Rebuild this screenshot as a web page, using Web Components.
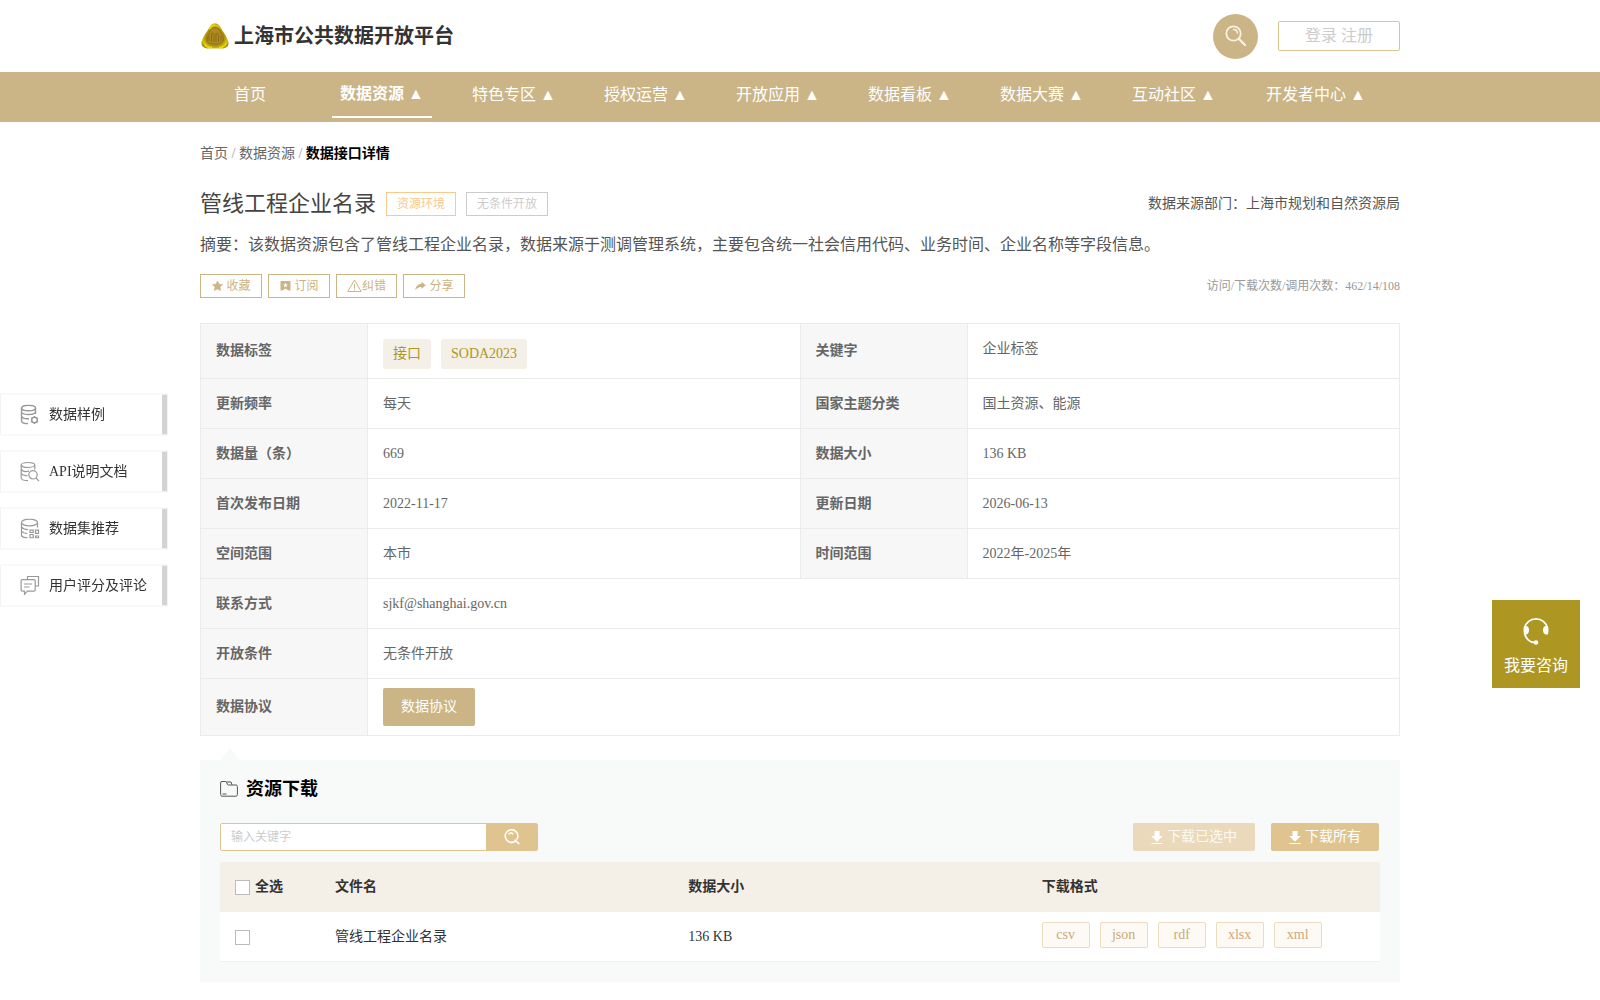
<!DOCTYPE html>
<html lang="zh-CN">
<head>
<meta charset="utf-8">
<title>管线工程企业名录 - 上海市公共数据开放平台</title>
<style>
  body {
    margin: 0;
    background: #fff;
    color: #333;
    font: 14px/20px "Liberation Serif", "Noto Sans CJK SC", serif;
    --gold: #cbb486;
    --gold-light: #e0c490;
    --olive: #ae9623;
    --line: #ebebeb;
    --page: 1200px;
  }
</style>
</head>
<body>
<portal-header></portal-header>
<portal-nav></portal-nav>
<portal-page>
  <bread-crumb></bread-crumb>
  <resource-intro></resource-intro>
  <info-table></info-table>
  <download-panel></download-panel>
</portal-page>
<side-menu></side-menu>
<consult-button></consult-button>

<script>
const base = `<style>
  *, *::before, *::after { box-sizing: border-box; }
  a { color: inherit; text-decoration: none; }
  button, input { font: inherit; color: inherit; margin: 0; padding: 0; border: 0; background: none; }
  button { cursor: pointer; }
  h1, h2, p { margin: 0; }
  svg { display: block; flex: none; }
  .wrap { max-width: var(--page); margin: 0 auto; }
</style>`;

function define(name, html, setup) {
  customElements.define(name, class extends HTMLElement {
    constructor() {
      super();
      this.attachShadow({ mode: 'open' }).innerHTML = base + html;
    }
    connectedCallback() { if (setup) setup(this, this.shadowRoot); }
  });
}

define('portal-header', `<style>
  :host { display: block; }
  .wrap { display: flex; align-items: center; height: 72px; }
  .brand { display: flex; align-items: center; gap: 5px; font-size: 20px; line-height: 30px; font-weight: bold; flex: 1; padding-left: 1px; }
  .search { width: 45px; height: 45px; border-radius: 50%; background: var(--gold); display: grid; place-items: center; margin-right: 20px; }
  .login { width: 122px; height: 30px; border: 1px solid var(--gold-light); border-radius: 2px; color: #ccc; font-size: 16px; line-height: 28px; text-align: center; }
</style>
<header class="wrap">
  <a class="brand" href="#">
    <svg width="28" height="26" viewBox="0 0 28 26">
      <defs>
        <radialGradient id="g" cx=".5" cy=".55" r=".6"><stop offset="0" stop-color="#b98f1c"/><stop offset=".55" stop-color="#ab8a12"/><stop offset=".8" stop-color="#d8c90c"/><stop offset="1" stop-color="#77600c"/></radialGradient>
      </defs>
      <path d="M14 .5C17 .5 18.500 2 20 5C22 9 27.500 15.500 27.500 20C27.500 24 24 25.500 20 25.500H8C4 25.500.5 24 .5 20C.5 15.500 6 9 8 5C9.500 2 11 .5 14 .5Z" fill="url(#g)"/>
      <path d="M4 21C5 24 9 24.500 11 24.500M18 24.500C21 24.500 24 23 25.500 20M8.500 6.500C9.500 3.500 11 2 14 2" fill="none" stroke="#e6dc00" stroke-width="1.500"/>
      <path d="M14 4.500C18 4.500 19 8 20 10C21.500 13 23 15 22 18C20 21 17 21 14 21C10 21 6 20.500 6 17C6 14 7.500 12 8.500 9.500C9.500 7 10.500 4.500 14 4.500Z" fill="#b08a20" stroke="#8f7014" stroke-width="1"/>
      <path d="M8 18V13M10.500 19V12C10.500 9.500 13 9.500 13 12V19M15 19V12C15 9.500 17.500 9.500 17.500 12V19M20 18V13" fill="none" stroke="#8a6a14"/>
    </svg>
    <span>上海市公共数据开放平台</span>
  </a>
  <button class="search" aria-label="搜索">
    <svg width="22" height="22" viewBox="0 0 22 22" fill="none" stroke="#f7f1e6" stroke-linecap="round">
      <circle cx="8.500" cy="8.500" r="7.200" stroke-width="1.800"/><path d="M8.500 4.500C10.800 4.500 12.300 6 12.300 8" stroke-width="1.600"/><path d="M14 14L20 20" stroke-width="2.400"/>
    </svg>
  </button>
  <div class="login"><a href="#">登录</a> <a href="#">注册</a></div>
</header>`);

define('portal-nav', `<style>
  :host { display: block; background: var(--gold); color: #fff; font-size: 16px; }
  nav { display: flex; gap: 32px; height: 50px; }
  a { min-width: 100px; height: 46px; line-height: 46px; text-align: center; white-space: nowrap; }
  a.on { font-weight: bold; line-height: 44px; border-bottom: 2px solid #fff; }
  a:last-child { padding: 0 10px; }
</style>
<nav class="wrap"></nav>`, (el, root) => {
  root.querySelector('nav').innerHTML = ['首页', '数据资源', '特色专区', '授权运营', '开放应用', '数据看板', '数据大赛', '互动社区', '开发者中心']
    .map((t, i) => `<a href="#"${i === 1 ? ' class="on" aria-current="page"' : ''}>${t}${i ? ' ▲' : ''}</a>`).join('');
});

define('portal-page', `<style>
  :host { display: block; }
  main { padding: 21px 0 18px; }
</style>
<main class="wrap"><slot></slot></main>`);

define('bread-crumb', `<style>
  :host { display: block; color: #999; line-height: 22px; }
  a { color: #666; }
  b { color: #000; }
</style>
<nav><a href="#">首页</a> / <a href="#">数据资源</a> / <b>数据接口详情</b></nav>`);

define('resource-intro', `<style>
  :host { display: block; color: #555; }
  .row { display: flex; align-items: center; }
  .head { gap: 10px; padding-top: 24px; }
  h1 { font-size: 22px; line-height: 30px; font-weight: normal; color: #444; }
  .tag { border: 1px solid #ccc; color: #ccc; font-size: 12px; line-height: 22px; padding: 0 10px; }
  .tag.warm { border-color: #fac98b; color: #fac98b; }
  .source { margin-left: auto; }
  p { font-size: 16px; line-height: 24px; padding: 14px 0 17px; }
  .acts { gap: 6px; font-size: 12px; color: #999; }
  button { display: flex; align-items: center; justify-content: center; gap: 3px; width: 62px; height: 24px; border: 1px solid var(--gold); color: var(--gold); }
  button.tight { gap: 0; width: 61px; }
  .count { margin-left: auto; }
</style>
<div class="row head">
  <h1>管线工程企业名录</h1>
  <span class="tag warm">资源环境</span>
  <span class="tag">无条件开放</span>
  <span class="source">数据来源部门：上海市规划和自然资源局</span>
</div>
<p>摘要：该数据资源包含了管线工程企业名录，数据来源于测调管理系统，主要包含统一社会信用代码、业务时间、企业名称等字段信息。</p>
<div class="row acts">
  <button><svg width="12" height="12" viewBox="0 0 12 12" fill="currentColor"><path d="M6.500 1L8 4.200L11.500 4.600L9 7L9.600 10.600L6.500 9.100L3.400 10.600L4 7L1.500 4.600L5 4.200Z" stroke="currentColor" stroke-width=".6" stroke-linejoin="round"/></svg>收藏</button>
  <button><svg width="12" height="12" viewBox="0 0 12 12"><path fill="currentColor" fill-rule="evenodd" d="M1.500 1H11.500V10.500H9.500L6.500 8.500L3.500 10.500H1.500ZM6.500 2.800L5.800 4.300L4.200 4.500L5.400 5.600L5.100 7.200L6.500 6.400L7.900 7.200L7.600 5.600L8.800 4.500L7.200 4.300Z"/></svg>订阅</button>
  <button class="tight"><svg width="15" height="14" viewBox="0 0 15 14" fill="none" stroke="currentColor"><path d="M7.500 1L14.200 12.500H.8Z" stroke-linejoin="round"/><path d="M7.500 5V9.500M7.500 10.300V11.500"/></svg>纠错</button>
  <button><svg width="12" height="12" viewBox="0 0 12 12"><path fill="currentColor" d="M7.500 1.800L11.800 5.200L7.500 8.700V6.900C5 6.900 3 7.700 1.300 10C1.700 6.400 4 4 7.500 3.700Z"/></svg>分享</button>
  <span class="count">访问/下载次数/调用次数：462/14/108</span>
</div>`);

define('info-table', `<style>
  :host { display: block; margin-top: 25px; color: #666; }
  table { width: 100%; border-collapse: collapse; table-layout: fixed; }
  th, td { border: 1px solid var(--line); padding: 0 15px; height: 50px; text-align: left; }
  th { background: #f7f7f7; }
  .lab { width: 167px; }
  .first td, .first th { height: 55px; }
  .first td { vertical-align: top; padding-top: 15px; }
  .last td { height: 57px; }
  .tags { display: flex; gap: 10px; }
  .tags a { background: #f4efe7; color: var(--olive); border-radius: 3px; line-height: 30px; padding: 0 10px; }
  button { display: block; width: 92px; height: 38px; border-radius: 2px; background: var(--gold); color: #fff; }
</style>
<table>
  <colgroup><col class="lab"><col><col class="lab"><col></colgroup>
  <tr class="first"><th scope="row">数据标签</th><td><div class="tags"><a href="#">接口</a><a href="#">SODA2023</a></div></td><th scope="row">关键字</th><td>企业标签</td></tr>
  <tr><th scope="row">更新频率</th><td>每天</td><th scope="row">国家主题分类</th><td>国土资源、能源</td></tr>
  <tr><th scope="row">数据量（条）</th><td>669</td><th scope="row">数据大小</th><td>136 KB</td></tr>
  <tr><th scope="row">首次发布日期</th><td>2022-11-17</td><th scope="row">更新日期</th><td>2026-06-13</td></tr>
  <tr><th scope="row">空间范围</th><td>本市</td><th scope="row">时间范围</th><td>2022年-2025年</td></tr>
  <tr><th scope="row">联系方式</th><td colspan="3">sjkf@shanghai.gov.cn</td></tr>
  <tr><th scope="row">开放条件</th><td colspan="3">无条件开放</td></tr>
  <tr class="last"><th scope="row">数据协议</th><td colspan="3"><button>数据协议</button></td></tr>
</table>`);

define('download-panel', `<style>
  :host { display: block; margin-top: 24px; padding: 16px 20px 20px; background: #f8faf9; position: relative; }
  :host::before { content: ""; position: absolute; left: 20px; top: -12px; border: solid transparent; border-width: 0 10px 12px; border-bottom-color: #f8faf9; }
  h2 { display: flex; align-items: center; gap: 8px; font-size: 18px; line-height: 26px; color: #000; }
  .bar { display: flex; align-items: center; margin: 21px 0 11px; color: #fff; }
  .find { display: flex; width: 318px; height: 28px; border: 1px solid var(--gold-light); border-radius: 2px; background: #fff; }
  .find input { flex: 1; min-width: 0; padding: 0 10px; font-size: 12px; color: #333; }
  .find input::placeholder { color: #ccc; opacity: 1; }
  .find button { width: 51px; background: var(--gold-light); display: grid; place-items: center; }
  .dl { display: flex; align-items: center; justify-content: center; gap: 4px; height: 28px; padding: 0 18px; border-radius: 2px; background: var(--gold-light); }
  .dl:disabled { background: #ead9ba; color: #fcf9f4; cursor: default; }
  .all { margin: 0 1px 0 16px; }
  .sel { margin-left: auto; }
  table { width: 100%; border-collapse: collapse; table-layout: fixed; color: #333; text-align: left; }
  th { background: #f4efe7; height: 50px; padding: 0 15px; }
  td { background: #fff; height: 49px; padding: 2px 15px 0; border-bottom: 1px solid #f4efe7; }
  .pick { width: 100px; }
  label { display: flex; align-items: center; gap: 5px; }
  input[type=checkbox] { appearance: none; width: 15px; height: 15px; border: 1px solid #bbb; background: #fff; display: block; }
  input[type=checkbox]:checked { background: var(--gold); }
  .fmt { display: flex; gap: 10px; padding-bottom: 5px; }
  .fmt button { width: 48px; height: 26px; border: 1px solid #ecdcbd; border-radius: 2px; background: #fdfaf5; color: #cba97a; }
</style>
<h2><svg width="18" height="18" viewBox="0 0 18 18" fill="none" stroke="#555"><path d="M.6 14.500V3Q.6 1.500 2 1.500H5.500Q6.500 1.500 6.800 3Q7.200 5 8.500 5H16Q17.400 5 17.400 6.500V14.500Q17.400 16.200 15.800 16.200H2.200Q.6 16.200.6 14.500ZM6.500 2H11L12 4.800M2.500 14H6.500"/></svg>资源下载</h2>
<div class="bar">
  <form class="find" role="search" onsubmit="return false">
    <input type="text" aria-label="输入关键字" placeholder="输入关键字">
    <button aria-label="搜索"><svg width="16" height="16" viewBox="0 0 16 16" fill="none" stroke="#fff" stroke-width="1.500" stroke-linecap="round"><path d="M11.900 11.600A6.300 6.300 0 1 1 13 10.200M11 11L14.800 14.600M5 4.800Q7 3.400 9 4.800"/></svg></button>
  </form>
  <button class="dl sel" disabled><svg width="12" height="13" viewBox="0 0 12 13" fill="#fff"><path d="M3.500 0H8.500V5H11.800L6 10.800L.2 5H3.500ZM.5 12H11.500V13H.5Z"/></svg>下载已选中</button>
  <button class="dl all"><svg width="12" height="13" viewBox="0 0 12 13" fill="#fff"><path d="M3.500 0H8.500V5H11.800L6 10.800L.2 5H3.500ZM.5 12H11.500V13H.5Z"/></svg>下载所有</button>
</div>
<table>
  <colgroup><col class="pick"><col><col><col></colgroup>
  <thead><tr><th scope="col"><label><input type="checkbox">全选</label></th><th scope="col">文件名</th><th scope="col">数据大小</th><th scope="col">下载格式</th></tr></thead>
  <tbody><tr><td><input type="checkbox" aria-label="管线工程企业名录"></td><td>管线工程企业名录</td><td>136 KB</td>
    <td><div class="fmt"><button>csv</button><button>json</button><button>rdf</button><button>xlsx</button><button>xml</button></div></td></tr></tbody>
</table>`);

define('side-menu', `<style>
  :host { position: fixed; left: 0; top: 50%; transform: translateY(-50%); }
  nav { display: flex; flex-direction: column; gap: 15px; }
  a { display: flex; align-items: center; gap: 9px; width: 168px; height: 42px; padding-left: 19px; background: linear-gradient(#d3d3d3, #d3d3d3) right / 5px 100% no-repeat #fff; border: 1px solid #f3f3f3; color: #333; white-space: nowrap; }
  svg { fill: none; stroke: #999; }
</style>
<nav>
  <a href="#"><svg width="20" height="20" viewBox="0 0 20 20" stroke-width="1.400"><ellipse cx="8.500" cy="3.500" rx="7" ry="2.800"/><path d="M1.500 3.500V16C1.500 18 4 19.200 8 19.200M15.500 3.500V9.500M1.500 7.500C2 10.500 14 11 15.500 7.500M1.500 11.500C2.500 14 6 14.500 9 14.200"/><circle cx="14.500" cy="15.500" r="2.800"/><path d="M14.500 11.400V12.700M14.500 18.300V19.600M11 13.500L12.100 14.100M16.900 16.900L18 17.500M11 17.500L12.100 16.900M16.900 14.100L18 13.500"/></svg>数据样例</a>
  <a href="#"><svg width="20" height="20" viewBox="0 0 20 20" stroke-width="1.200"><ellipse cx="8" cy="3.500" rx="6.800" ry="2.500"/><path d="M1.200 3.500V16.500C1.500 18.500 4.500 19.200 8 19M14.800 3.500V8M1.200 7.500C2 9.500 5 10.500 9 9.700M1.200 12C2.500 14 5 14.300 7.500 14"/><circle cx="13" cy="13.300" r="4.200"/><path d="M16 16.500L19 19.600"/></svg>API说明文档</a>
  <a href="#"><svg width="20" height="20" viewBox="0 0 20 20" stroke-width="1.200"><ellipse cx="9.500" cy="4" rx="8" ry="3.300"/><path d="M1.500 4V17C2 18.500 5 19.200 7.500 19.200M17.500 4V9M1.500 8C2.500 10.500 5 11 8 11.200M1.500 12.500C3 14.500 5 15 7.500 15M10 11.700H13.200V14H10ZM15.500 11.700H18.500V14.800H15.500ZM10 16H13.200V19.300H10ZM15.500 17.500H18.500V19.300H15.500Z"/></svg>数据集推荐</a>
  <a href="#"><svg width="20" height="20" viewBox="0 0 20 20" stroke-width="1.200"><path d="M7.500 4.500V1H18.500V10.500H15.500M2.300 4.200H14Q15.200 4.200 15.200 5.500V14.500Q15.200 15.700 14 15.700H7.500L4.500 18.800V15.700H2.300Q1.100 15.700 1.100 14.500V5.500Q1.100 4.200 2.300 4.200ZM4 8.500H12M4 11.500H9.500"/></svg>用户评分及评论</a>
</nav>`);

define('consult-button', `<style>
  :host { position: fixed; right: 20px; top: 60%; }
  button { display: flex; flex-direction: column; align-items: center; gap: 9px; width: 88px; height: 88px; padding-top: 17px; background: var(--olive); color: #fff; font-size: 16px; line-height: 24px; }
</style>
<button><svg width="28" height="28" viewBox="0 0 28 28" fill="none" stroke="#fff" stroke-width="1.800"><path d="M2.500 11A11.800 11.800 0 0 1 25.500 11M2.500 16C3.500 21.500 7.500 25.500 13 25.500"/><path d="M2 9H4.500Q7 9.500 7 13T4.500 17.500H2Q.8 13.500 2 9ZM26 9H23.500Q21 9.500 21 13T23.500 17.500H26Q27.200 13.500 26 9Z" fill="#fff" stroke="none"/><circle cx="14" cy="25.500" r="2.300" fill="#fff" stroke="none"/></svg>我要咨询</button>`);
</script>
</body>
</html>
